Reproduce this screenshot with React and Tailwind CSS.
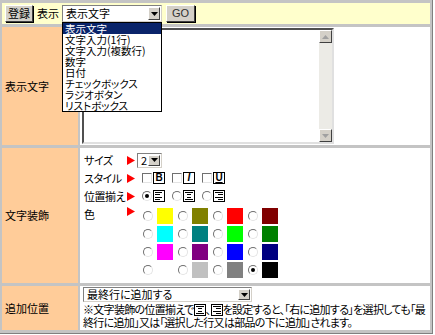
import React from 'react';

// --- small form controls in the old Windows look ---

const font = "font-['Noto_Sans_CJK_JP','Noto_Sans',sans-serif] [font-feature-settings:'palt']";

const Arrow = ({ up, gray }) => (
  <svg width="7" height="4" viewBox="0 0 7 4">
    <polygon points={up ? '0,4 7,4 3.5,0' : '0,0 7,0 3.5,4'} fill={gray ? '#a0a0a0' : '#000'} />
  </svg>
);

const DropBtn = () => (
  <span className="flex items-center justify-center w-[12px] shrink-0 bg-[#d4d0c8] border border-t-white border-l-white border-b-[#404040] border-r-[#404040]">
    <Arrow />
  </span>
);

const Select = ({ className, children }) => (
  <div className={`flex items-stretch bg-white border border-t-[#808080] border-l-[#808080] border-b-[#d4d0c8] border-r-[#d4d0c8] p-[1px] ${className}`}>
    <span className="flex-1 flex items-center pl-[2px] text-[11px] leading-none whitespace-nowrap">{children}</span>
    <DropBtn />
  </div>
);

const Button = ({ className, children }) => (
  <button className={`h-[17px] bg-[#d4d0c8] border border-t-white border-l-white border-b-[#404040] border-r-[#404040] shadow-[1px_1px_0_#000] text-[11px] leading-none ${className}`}>
    {children}
  </button>
);

const Radio = ({ checked }) => (
  <span className="relative inline-block w-[10px] h-[10px] shrink-0 rounded-full bg-white border border-t-[#707070] border-l-[#707070] border-b-[#e4e4e4] border-r-[#e4e4e4]">
    {checked && <span className="absolute left-[2px] top-[2px] w-[4px] h-[4px] rounded-full bg-black" />}
  </span>
);

const Checkbox = () => (
  <span className="inline-block w-[10px] h-[10px] shrink-0 bg-white border border-t-[#707070] border-l-[#707070] border-b-[#e4e4e4] border-r-[#e4e4e4]" />
);

const Tri = () => (
  <svg width="8" height="9" viewBox="0 0 8 9">
    <polygon points="0,0 8,4.5 0,9" fill="#ff0000" />
  </svg>
);

const LetterIcon = ({ children, className }) => (
  <span className={`flex items-center justify-center w-[12px] h-[12px] shrink-0 border border-black text-[10px] leading-none font-bold font-['Liberation_Sans',sans-serif] ${className}`}>
    {children}
  </span>
);

const AlignIcon = ({ type }) => {
  const rows = {
    left: [[2, 9], [2, 7], [2, 9], [2, 7]],
    center: [[2, 10], [4, 8], [4, 8], [2, 10]],
    right: [[2, 10], [5, 10], [2, 10], [5, 10]],
  }[type];
  return (
    <svg width="12" height="12" viewBox="0 0 12 12" shapeRendering="crispEdges" className="shrink-0">
      <rect x="0.5" y="0.5" width="11" height="11" fill="#fff" stroke="#000" />
      {rows.map(([a, b], i) => (
        <line key={i} x1={a} x2={b} y1={2.5 + i * 2.3} y2={2.5 + i * 2.3} stroke="#000" />
      ))}
    </svg>
  );
};

const COLORS = [
  ['#ffff00', '#808000', '#ff0000', '#800000'],
  ['#00ffff', '#008080', '#00ff00', '#008000'],
  ['#ff00ff', '#800080', '#0000ff', '#000080'],
  ['#ffffff', '#c0c0c0', '#808080', '#000000'],
];

const LIST = ['表示文字', '文字入力(1行)', '文字入力(複数行)', '数字', '日付', 'チェックボックス', 'ラジオボタン', 'リストボックス'];

const Label = ({ children }) => (
  <div className="w-[76px] shrink-0 bg-[#ffcc99] flex items-center pl-[3px] text-[11px]">{children}</div>
);

export default function App() {
  return (
    <div className={`relative w-[433px] h-[334px] bg-[#c4c4c4] border-r border-b border-[#808080] pt-[3px] pl-[2px] pr-[2px] flex flex-col gap-[3px] text-black ${font}`}>
      {/* toolbar */}
      <div className="h-[21px] bg-[#ffffcc] flex items-center pl-[3px] text-[11px]">
        <Button className="w-[28px]">登録</Button>
        <span className="ml-[4px] w-[25px]">表示</span>
        <Select className="w-[100px] h-[17px]">表示文字</Select>
        <Button className="ml-[4px] w-[29px] text-[#303030] font-['Liberation_Sans',sans-serif]">GO</Button>
      </div>

      {/* 表示文字 */}
      <div className="h-[118px] flex gap-[2px]">
        <Label>表示文字</Label>
        <div className="flex-1 bg-white pl-[2px] pt-[1px]">
          <div className="w-[252px] h-[116px] flex border-2 border-t-[#505050] border-l-[#505050] border-b-[#e0e0e0] border-r-[#e0e0e0] bg-white">
            <div className="flex-1" />
            <div className="w-[13px] flex flex-col bg-[#ecebe6]">
              <span className="h-[13px] flex items-center justify-center bg-[#d4d0c8] border border-t-white border-l-white border-b-[#404040] border-r-[#404040]"><Arrow up gray /></span>
              <span className="flex-1" />
              <span className="h-[13px] flex items-center justify-center bg-[#d4d0c8] border border-t-white border-l-white border-b-[#404040] border-r-[#404040]"><Arrow gray /></span>
            </div>
          </div>
        </div>
      </div>

      {/* 文字装飾 */}
      <div className="h-[135px] flex gap-[2px]">
        <Label>文字装飾</Label>
        <div className="flex-1 bg-white pt-[3px] pl-[4px] text-[11px]">
          <div className="h-[18px] flex items-center">
            <span className="w-[43px] tracking-[-0.5px]">サイズ</span>
            <span className="w-[10px]"><Tri /></span>
            <Select className="w-[25px] h-[15px]">2</Select>
          </div>
          <div className="h-[18px] flex items-center">
            <span className="w-[43px] tracking-[-0.5px]">スタイル</span>
            <span className="w-[15px]"><Tri /></span>
            {['B', 'I', 'U'].map((l, i) => (
              <span key={l} className="flex items-center gap-[1px] mr-[7px]">
                <Checkbox />
                <LetterIcon className={i === 1 ? 'italic' : i === 2 ? 'underline' : ''}>{l}</LetterIcon>
              </span>
            ))}
          </div>
          <div className="h-[18px] flex items-center">
            <span className="w-[43px] tracking-[-0.5px]">位置揃え</span>
            <span className="w-[15px]"><Tri /></span>
            {['left', 'center', 'right'].map((t, i) => (
              <span key={t} className="flex items-center gap-[1px] mr-[7px]">
                <Radio checked={i === 0} />
                <AlignIcon type={t} />
              </span>
            ))}
          </div>
          <div className="flex items-start">
            <span className="w-[43px] pt-[1px]">色</span>
            <span className="w-[16px] pt-[2px]"><Tri /></span>
            <div className="pt-[3px] flex flex-col gap-[2px]">
              {COLORS.map((row, r) => (
                <div key={r} className="flex h-[16px]">
                  {row.map((c, i) => (
                    <span key={c} className="flex items-center mr-[5px]">
                      <Radio checked={r === 3 && i === 3} />
                      <span className="ml-[4px] w-[16px] h-[16px]" style={{ backgroundColor: c }} />
                    </span>
                  ))}
                </div>
              ))}
            </div>
          </div>
        </div>
      </div>

      {/* 追加位置 */}
      <div className="h-[44px] flex gap-[2px]">
        <Label>追加位置</Label>
        <div className="flex-1 bg-white pl-[3px] pt-[1px] text-[11px]">
          <Select className="w-[169px] h-[15px]">最終行に追加する</Select>
          <div className="leading-[13px] mt-[1px] whitespace-nowrap tracking-[-0.7px]">
            <div className="flex items-center">※文字装飾の位置揃えで<AlignIcon type="center" />、<AlignIcon type="right" />を設定すると、「右に追加する」を選択しても「最</div>
            <div>終行に追加」又は「選択した行又は部品の下に追加」されます。</div>
          </div>
        </div>
      </div>

      {/* open dropdown list */}
      <div className="absolute left-[62px] top-[22px] w-[100px] border border-black bg-white text-[10.5px]">
        {LIST.map((t, i) => (
          <div key={t} className={`h-[11px] leading-[11px] pl-[2px] whitespace-nowrap ${i === 0 ? 'bg-[#0a246a] text-white' : ''}`}>{t}</div>
        ))}
      </div>
    </div>
  );
}
